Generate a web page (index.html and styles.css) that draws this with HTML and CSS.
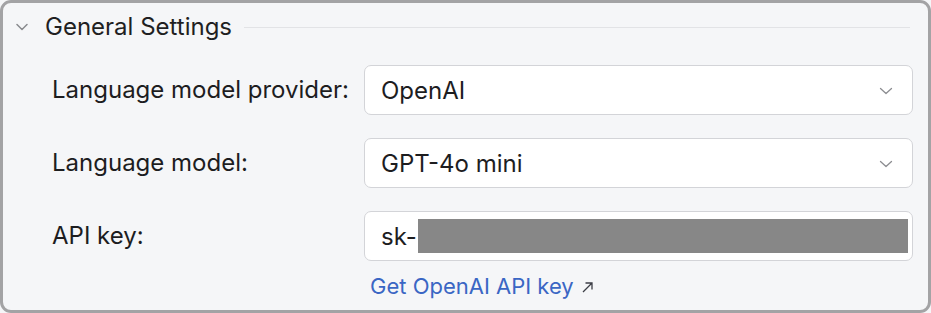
FILE: index.html
```html
<!DOCTYPE html>
<html>
<head>
<meta charset="utf-8">
<link rel="stylesheet" href="styles.css">
</head>
<body>
<div class="panel">
  <div class="header">
    <svg class="hchev" width="12" height="8" viewBox="0 0 12 8"><path d="M1 1.5 L6 6.5 L11 1.5" fill="none" stroke="#8a8b8f" stroke-width="1.5" stroke-linecap="round" stroke-linejoin="round"/></svg>
    <span class="title">General Settings</span>
    <div class="rule"></div>
  </div>
  <div class="form">
    <label class="label">Language model provider:</label>
    <div class="field select">
      <span class="value">OpenAI</span>
      <svg class="chev" width="14" height="8" viewBox="0 0 14 8"><path d="M1.5 1.5 L7 6.5 L12.5 1.5" fill="none" stroke="#8c8d91" stroke-width="1.3" stroke-linecap="round" stroke-linejoin="round"/></svg>
    </div>
    <label class="label">Language model:</label>
    <div class="field select">
      <span class="value">GPT-4o mini</span>
      <svg class="chev" width="14" height="8" viewBox="0 0 14 8"><path d="M1.5 1.5 L7 6.5 L12.5 1.5" fill="none" stroke="#8c8d91" stroke-width="1.3" stroke-linecap="round" stroke-linejoin="round"/></svg>
    </div>
    <label class="label">API key:</label>
    <div class="keycol">
      <div class="field input">
        <span class="value">sk-</span>
        <span class="redact"></span>
      </div>
      <a class="link" href="#">Get OpenAI API key <svg class="arrow" width="13" height="13" viewBox="0 0 13 13"><path d="M2 11 L11 2 M4.5 2 H11 V8.5" fill="none" stroke="#3c3e46" stroke-width="1.3"/></svg></a>
    </div>
  </div>
</div>
</body>
</html>
```
FILE: styles.css
```css
html, body {
  margin: 0;
  padding: 0;
  background: #f5f6f8;
}
body {
  font-family: Inter, "Noto Sans", sans-serif;
  color: #1d1d1f;
}
.panel {
  width: 931px;
  height: 313px;
  box-sizing: border-box;
  border: 3px solid #a3a3a5;
  border-radius: 11px;
  background: #f5f6f8;
  padding: 8px 15px 0 0;
}
.header {
  display: flex;
  align-items: center;
  height: 30px;
}
.hchev {
  margin-left: 13px;
  margin-top: 1px;
}
.title {
  margin-left: 17px;
  font-size: 24px;
  color: #1f1f22;
}
.rule {
  flex: 1;
  height: 1px;
  background: #e2e3e6;
  margin-left: 12px;
  margin-right: 3px;
  margin-top: 2px;
}
.form {
  display: grid;
  grid-template-columns: 312px 1fr;
  row-gap: 23px;
  margin-top: 24px;
  padding-left: 49px;
  align-items: start;
}
.label {
  font-size: 24px;
  height: 50px;
  line-height: 50px;
  color: #1d1d1f;
}
.field {
  height: 50px;
  box-sizing: border-box;
  background: #fff;
  border: 1px solid #d3d4d8;
  border-radius: 7px;
  display: flex;
  align-items: center;
  padding-left: 16px;
}
.value {
  font-size: 24px;
  color: #1d1d1f;
}
.select .value {
  flex: 1;
}
.chev {
  margin-right: 19px;
  margin-top: 2px;
}
.input {
  padding-right: 4px;
}
.redact {
  flex: 1;
  height: 34px;
  background: #878787;
  margin-left: 1px;
}
.keycol {
  display: flex;
  flex-direction: column;
}
.link {
  margin-top: 12px;
  margin-left: 6px;
  font-size: 22px;
  color: #3a66c4;
  text-decoration: none;
  display: flex;
  align-items: center;
  gap: 7px;
}
.arrow {
  margin-top: 3px;
}
```
